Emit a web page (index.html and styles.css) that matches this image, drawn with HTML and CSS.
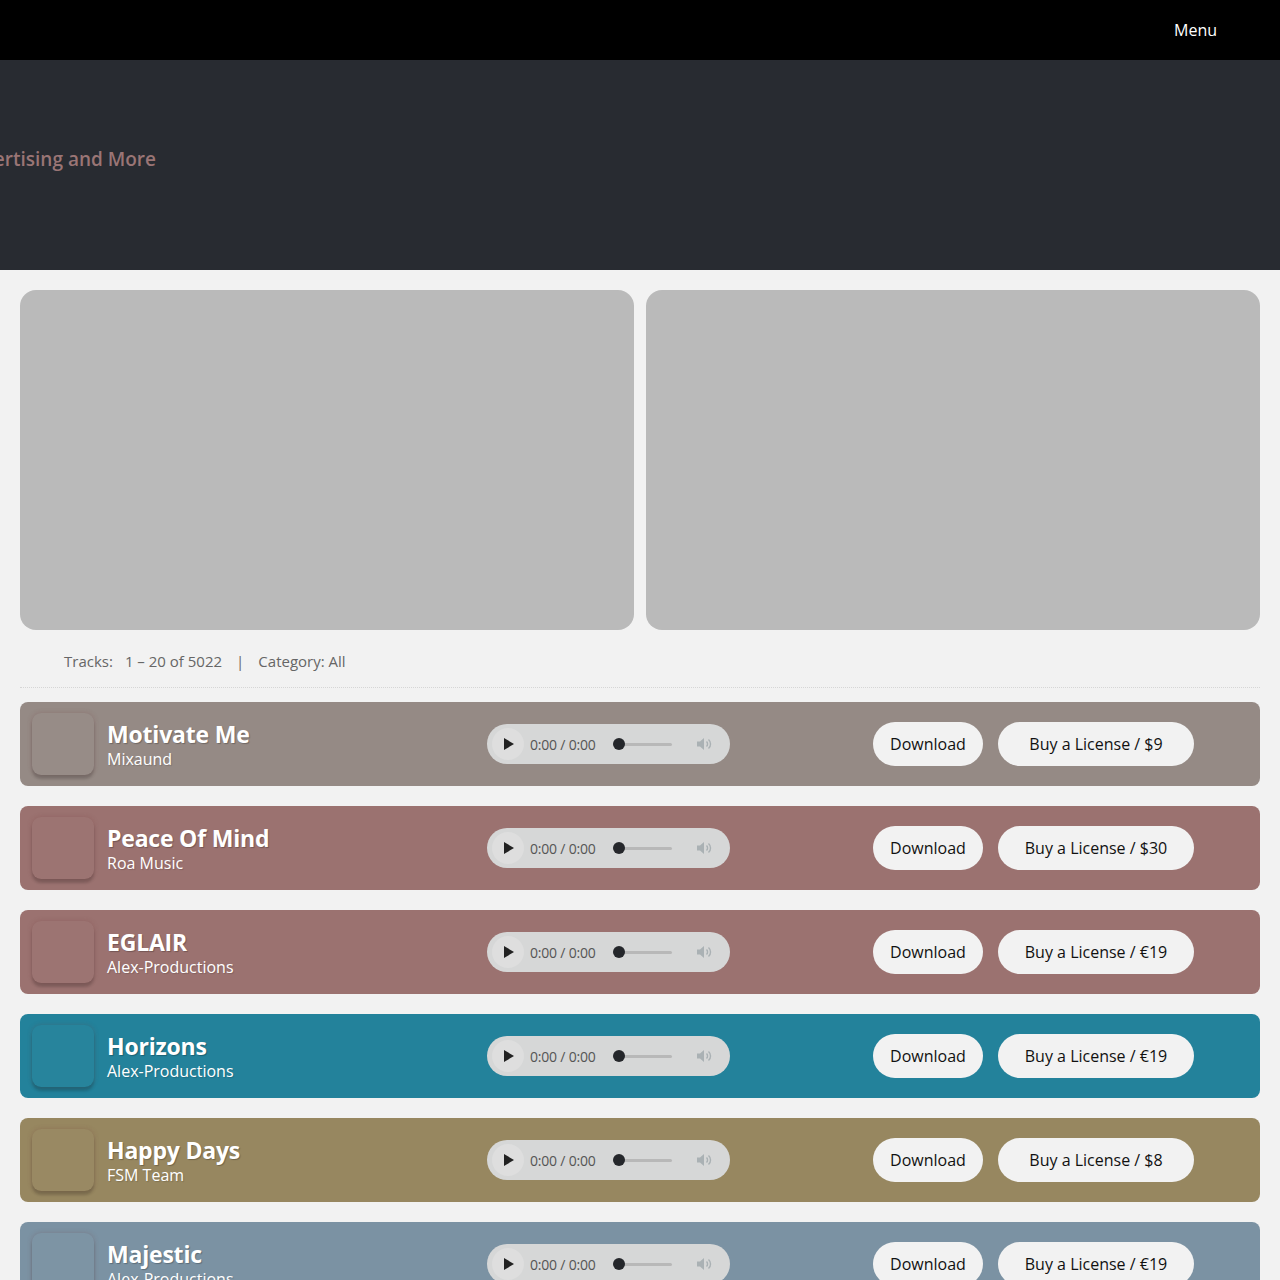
FILE: index.html
```html
<!DOCTYPE html>
<html lang="en">
<head>
  <meta charset="UTF-8">
  <meta name="viewport" content="width=device-width, initial-scale=1.0">
  <title>Royalty Free Music</title>
  <link rel="stylesheet" href="styles.css">
</head>
<body>
  <header class="topbar">
    <a class="menu-link" href="#">Menu</a>
  </header>

  <section class="hero">
    <h2 class="hero-text">Royalty Free Music for YouTube, Video, Advertising and More</h2>
  </section>

  <main class="content">
    <div class="banners">
      <div class="banner"></div>
      <div class="banner"></div>
    </div>

    <div class="tracks-info">
      <span>Tracks:</span>
      <span>1 &ndash; 20 of 5022</span>
      <span class="sep">|</span>
      <span>Category: All</span>
    </div>

    <div class="track-list">
      <div class="track" style="background: #958a85;">
        <div class="track-meta">
          <div class="cover"></div>
          <div class="names">
            <div class="title">Motivate Me</div>
            <div class="artist">Mixaund</div>
          </div>
        </div>
        <div class="player">
          <span class="play"><svg viewBox="0 0 10 12" width="10" height="12"><path d="M0 0 L10 6 L0 12 Z" fill="#222"/></svg></span>
          <span class="time">0:00 / 0:00</span>
          <span class="seek"><span class="knob"></span></span>
          <span class="vol"><svg viewBox="0 0 16 14" width="16" height="14"><path d="M1 4.5h3l4-3.5v12l-4-3.5H1z" fill="#aab1b4"/><path d="M10.5 4.5a3.5 3.5 0 0 1 0 5M12.5 2.5a6 6 0 0 1 0 9" stroke="#aab1b4" stroke-width="1.4" fill="none"/></svg></span>
        </div>
        <div class="actions">
          <a class="btn btn-download" href="#">Download</a>
          <a class="btn btn-buy" href="#">Buy a License / $9</a>
        </div>
      </div>

      <div class="track" style="background: #9b7270;">
        <div class="track-meta">
          <div class="cover"></div>
          <div class="names">
            <div class="title">Peace Of Mind</div>
            <div class="artist">Roa Music</div>
          </div>
        </div>
        <div class="player">
          <span class="play"><svg viewBox="0 0 10 12" width="10" height="12"><path d="M0 0 L10 6 L0 12 Z" fill="#222"/></svg></span>
          <span class="time">0:00 / 0:00</span>
          <span class="seek"><span class="knob"></span></span>
          <span class="vol"><svg viewBox="0 0 16 14" width="16" height="14"><path d="M1 4.5h3l4-3.5v12l-4-3.5H1z" fill="#aab1b4"/><path d="M10.5 4.5a3.5 3.5 0 0 1 0 5M12.5 2.5a6 6 0 0 1 0 9" stroke="#aab1b4" stroke-width="1.4" fill="none"/></svg></span>
        </div>
        <div class="actions">
          <a class="btn btn-download" href="#">Download</a>
          <a class="btn btn-buy" href="#">Buy a License / $30</a>
        </div>
      </div>

      <div class="track" style="background: #9b7270;">
        <div class="track-meta">
          <div class="cover"></div>
          <div class="names">
            <div class="title">EGLAIR</div>
            <div class="artist">Alex-Productions</div>
          </div>
        </div>
        <div class="player">
          <span class="play"><svg viewBox="0 0 10 12" width="10" height="12"><path d="M0 0 L10 6 L0 12 Z" fill="#222"/></svg></span>
          <span class="time">0:00 / 0:00</span>
          <span class="seek"><span class="knob"></span></span>
          <span class="vol"><svg viewBox="0 0 16 14" width="16" height="14"><path d="M1 4.5h3l4-3.5v12l-4-3.5H1z" fill="#aab1b4"/><path d="M10.5 4.5a3.5 3.5 0 0 1 0 5M12.5 2.5a6 6 0 0 1 0 9" stroke="#aab1b4" stroke-width="1.4" fill="none"/></svg></span>
        </div>
        <div class="actions">
          <a class="btn btn-download" href="#">Download</a>
          <a class="btn btn-buy" href="#">Buy a License / &euro;19</a>
        </div>
      </div>

      <div class="track" style="background: #23829b;">
        <div class="track-meta">
          <div class="cover"></div>
          <div class="names">
            <div class="title">Horizons</div>
            <div class="artist">Alex-Productions</div>
          </div>
        </div>
        <div class="player">
          <span class="play"><svg viewBox="0 0 10 12" width="10" height="12"><path d="M0 0 L10 6 L0 12 Z" fill="#222"/></svg></span>
          <span class="time">0:00 / 0:00</span>
          <span class="seek"><span class="knob"></span></span>
          <span class="vol"><svg viewBox="0 0 16 14" width="16" height="14"><path d="M1 4.5h3l4-3.5v12l-4-3.5H1z" fill="#aab1b4"/><path d="M10.5 4.5a3.5 3.5 0 0 1 0 5M12.5 2.5a6 6 0 0 1 0 9" stroke="#aab1b4" stroke-width="1.4" fill="none"/></svg></span>
        </div>
        <div class="actions">
          <a class="btn btn-download" href="#">Download</a>
          <a class="btn btn-buy" href="#">Buy a License / &euro;19</a>
        </div>
      </div>

      <div class="track" style="background: #978760;">
        <div class="track-meta">
          <div class="cover"></div>
          <div class="names">
            <div class="title">Happy Days</div>
            <div class="artist">FSM Team</div>
          </div>
        </div>
        <div class="player">
          <span class="play"><svg viewBox="0 0 10 12" width="10" height="12"><path d="M0 0 L10 6 L0 12 Z" fill="#222"/></svg></span>
          <span class="time">0:00 / 0:00</span>
          <span class="seek"><span class="knob"></span></span>
          <span class="vol"><svg viewBox="0 0 16 14" width="16" height="14"><path d="M1 4.5h3l4-3.5v12l-4-3.5H1z" fill="#aab1b4"/><path d="M10.5 4.5a3.5 3.5 0 0 1 0 5M12.5 2.5a6 6 0 0 1 0 9" stroke="#aab1b4" stroke-width="1.4" fill="none"/></svg></span>
        </div>
        <div class="actions">
          <a class="btn btn-download" href="#">Download</a>
          <a class="btn btn-buy" href="#">Buy a License / $8</a>
        </div>
      </div>

      <div class="track" style="background: #7b92a3;">
        <div class="track-meta">
          <div class="cover"></div>
          <div class="names">
            <div class="title">Majestic</div>
            <div class="artist">Alex-Productions</div>
          </div>
        </div>
        <div class="player">
          <span class="play"><svg viewBox="0 0 10 12" width="10" height="12"><path d="M0 0 L10 6 L0 12 Z" fill="#222"/></svg></span>
          <span class="time">0:00 / 0:00</span>
          <span class="seek"><span class="knob"></span></span>
          <span class="vol"><svg viewBox="0 0 16 14" width="16" height="14"><path d="M1 4.5h3l4-3.5v12l-4-3.5H1z" fill="#aab1b4"/><path d="M10.5 4.5a3.5 3.5 0 0 1 0 5M12.5 2.5a6 6 0 0 1 0 9" stroke="#aab1b4" stroke-width="1.4" fill="none"/></svg></span>
        </div>
        <div class="actions">
          <a class="btn btn-download" href="#">Download</a>
          <a class="btn btn-buy" href="#">Buy a License / &euro;19</a>
        </div>
      </div>
    </div>
  </main>
</body>
</html>
```

FILE: styles.css
```css
body {
  margin: 0;
  background: #f2f2f2;
  font-family: "Open Sans", "Noto Sans", sans-serif;
  color: #333;
}

a {
  text-decoration: none;
}

/* top bar */
.topbar {
  height: 60px;
  background: #000;
  display: flex;
  align-items: center;
  justify-content: flex-end;
  padding-right: 63px;
}

.menu-link {
  color: #fff;
  font-size: 16px;
}

/* hero */
.hero {
  height: 210px;
  background: #282b31;
  display: flex;
  align-items: center;
  overflow: hidden;
}

.hero-text {
  margin: 0 0 12px;
  white-space: nowrap;
  font-size: 19px;
  font-weight: 600;
  color: #9a7575;
  transform: translateX(calc(-100% + 156px));
}

/* content */
.content {
  padding: 20px 20px 40px;
}

.banners {
  display: grid;
  grid-template-columns: 1fr 1fr;
  gap: 12px;
}

.banner {
  height: 340px;
  background: #bababa;
  border-radius: 16px;
}

.tracks-info {
  display: flex;
  gap: 12px;
  padding: 21px 0 16px 44px;
  font-size: 15px;
  color: #666;
  border-bottom: 1px dotted #d6d6d6;
}

.tracks-info .sep {
  margin: 0 2px;
}

.track-list {
  display: flex;
  flex-direction: column;
  gap: 20px;
  margin-top: 14px;
}

.track {
  height: 84px;
  border-radius: 8px;
  display: flex;
  align-items: center;
  padding: 0 66px 0 12px;
}

.track-meta {
  display: flex;
  align-items: center;
  gap: 13px;
  width: 455px;
}

.cover {
  width: 62px;
  height: 62px;
  border-radius: 9px;
  background: rgba(255, 255, 255, 0.02);
  box-shadow: 0 4px 3px rgba(0, 0, 0, 0.18), 0 0 5px rgba(120, 60, 60, 0.25);
}

.names {
  color: #fff;
  margin-top: 2px;
}

.title {
  font-size: 23px;
  font-weight: 700;
  line-height: 28px;
  letter-spacing: -0.2px;
  text-shadow: 1px 1px 1px rgba(0, 0, 0, 0.25);
}

.artist {
  font-size: 16px;
  line-height: 22px;
  text-shadow: 1px 1px 1px rgba(0, 0, 0, 0.15);
}

/* audio player */
.player {
  width: 243px;
  height: 40px;
  border-radius: 20px;
  background: #d6d7d7;
  display: flex;
  align-items: center;
  box-sizing: border-box;
  padding-left: 5px;
}

.play {
  width: 32px;
  height: 32px;
  border-radius: 50%;
  background: #dedede;
  display: flex;
  align-items: center;
  justify-content: center;
  padding-left: 2px;
  box-sizing: border-box;
}

.time {
  font-size: 14px;
  color: #555;
  margin-left: 6px;
  letter-spacing: -0.2px;
}

.seek {
  position: relative;
  width: 59px;
  height: 3px;
  border-radius: 2px;
  background: #b8b8b8;
  margin-left: 17px;
}

.knob {
  position: absolute;
  left: 0;
  top: -4.5px;
  width: 12px;
  height: 12px;
  border-radius: 50%;
  background: #25272b;
}

.vol {
  margin-left: 24px;
  display: flex;
}

/* buttons */
.actions {
  margin-left: auto;
  display: flex;
  gap: 15px;
}

.btn {
  height: 44px;
  border-radius: 22px;
  background: #f2f2f2;
  color: #111;
  font-size: 16px;
  display: flex;
  align-items: center;
  justify-content: center;
}

.btn-download {
  width: 110px;
}

.btn-buy {
  width: 196px;
}
```
